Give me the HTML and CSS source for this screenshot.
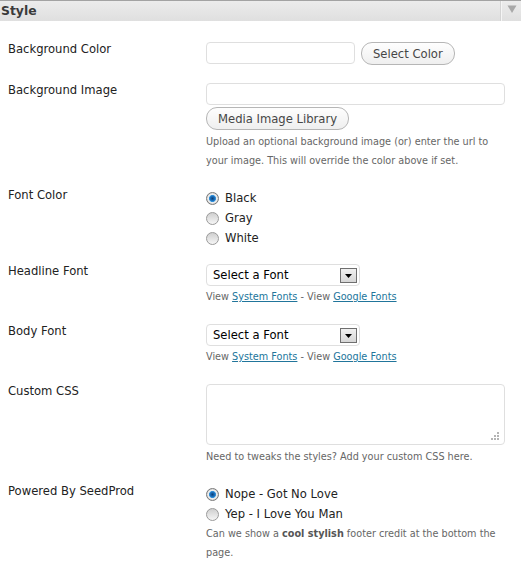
FILE: index.html
```
<!DOCTYPE html>
<html lang="en">
<head>
    <meta charset="UTF-8">
    <meta name="viewport" content="width=device-width, initial-scale=1.0">
    <title>Style</title>
    <link rel="stylesheet" href="styles.css">
</head>
<body>
    <div class="postbox">
        <div class="hndle">
            <h3>Style</h3>
            <div class="handlediv">
                <svg width="10" height="10" viewBox="0 0 10 10"><path d="M0.5 1.5 L9.5 1.5 L5 9 Z" fill="#a8a8a8"/></svg>
            </div>
        </div>
        <div class="inside">
            <div class="row">
                <label class="row-label">Background Color</label>
                <div class="row-field inline">
                    <input type="text" class="text color-input">
                    <button type="button" class="button">Select Color</button>
                </div>
            </div>
            <div class="row">
                <label class="row-label">Background Image</label>
                <div class="row-field">
                    <input type="text" class="text wide-input">
                    <button type="button" class="button media-btn">Media Image Library</button>
                    <p class="help">Upload an optional background image (or) enter the url to your image. This will override the color above if set.</p>
                </div>
            </div>
            <div class="row radios-row">
                <label class="row-label">Font Color</label>
                <div class="row-field">
                    <label class="radio"><input type="radio" name="fontcolor" checked> Black</label>
                    <label class="radio"><input type="radio" name="fontcolor"> Gray</label>
                    <label class="radio"><input type="radio" name="fontcolor"> White</label>
                </div>
            </div>
            <div class="row">
                <label class="row-label">Headline Font</label>
                <div class="row-field">
                    <div class="select">
                        <span>Select a Font</span>
                        <span class="select-arrow"><svg width="7" height="4" viewBox="0 0 7 4"><path d="M0 0 H7 L3.5 4 Z" fill="#000"/></svg></span>
                    </div>
                    <p class="help fonts">View <a href="#">System Fonts</a> - View <a href="#">Google Fonts</a></p>
                </div>
            </div>
            <div class="row">
                <label class="row-label">Body Font</label>
                <div class="row-field">
                    <div class="select">
                        <span>Select a Font</span>
                        <span class="select-arrow"><svg width="7" height="4" viewBox="0 0 7 4"><path d="M0 0 H7 L3.5 4 Z" fill="#000"/></svg></span>
                    </div>
                    <p class="help fonts">View <a href="#">System Fonts</a> - View <a href="#">Google Fonts</a></p>
                </div>
            </div>
            <div class="row">
                <label class="row-label">Custom CSS</label>
                <div class="row-field">
                    <div class="textarea">
                        <svg class="grip" width="8" height="8" viewBox="0 0 8 8" fill="#b4b4b4">
                            <rect x="6" y="0" width="2" height="2"/>
                            <rect x="3" y="3" width="2" height="2"/><rect x="6" y="3" width="2" height="2"/>
                            <rect x="0" y="6" width="2" height="2"/><rect x="3" y="6" width="2" height="2"/><rect x="6" y="6" width="2" height="2"/>
                        </svg>
                    </div>
                    <p class="help">Need to tweaks the styles? Add your custom CSS here.</p>
                </div>
            </div>
            <div class="row">
                <label class="row-label">Powered By SeedProd</label>
                <div class="row-field">
                    <label class="radio"><input type="radio" name="powered" checked> Nope - Got No Love</label>
                    <label class="radio"><input type="radio" name="powered"> Yep - I Love You Man</label>
                    <p class="help credit">Can we show a <strong>cool stylish</strong> footer credit at the bottom the page.</p>
                </div>
            </div>
        </div>
    </div>
</body>
</html>
```

FILE: styles.css
```
body {
    margin: 0;
    background: #fff;
    font-family: "DejaVu Sans", Verdana, sans-serif;
    font-size: 11.6px;
    color: #333;
}

.hndle {
    display: flex;
    height: 20px;
    border-top: 1px solid #a3a3a3;
    background: linear-gradient(#ececec, #dfdfdf);
}

.hndle h3 {
    flex: 1;
    margin: 0;
    padding-left: 1px;
    font-size: 12.4px;
    line-height: 19px;
    color: #3a3a3a;
}

.handlediv {
    width: 19px;
    display: flex;
    justify-content: center;
    padding-top: 3px;
    border-left: 1px solid #f5f5f5;
    box-shadow: -1px 0 0 #d4d4d4;
}

.inside {
    padding: 11px 16px 0 8px;
}

.row {
    display: grid;
    grid-template-columns: 198px 1fr;
    padding: 10px 0 8px;
}

.row.radios-row {
    padding-bottom: 6px;
}

.row-label {
    line-height: 15px;
    color: #222;
}

.row-field.inline {
    display: flex;
    align-items: flex-start;
    gap: 6px;
}

.text {
    display: block;
    box-sizing: border-box;
    height: 22px;
    margin: 0;
    border: 1px solid #dfdfdf;
    border-radius: 4px;
    background: #fff;
}

.color-input {
    width: 149px;
}

.wide-input {
    width: 100%;
}

.button {
    box-sizing: border-box;
    height: 23px;
    padding: 0 11px;
    border: 1px solid #b6b6b6;
    border-radius: 11px;
    background: linear-gradient(#fefefe, #efefef);
    font-family: inherit;
    font-size: 11.6px;
    color: #464646;
    cursor: pointer;
}

.media-btn {
    display: block;
    margin-top: 2px;
}

.help {
    margin: 2px 0 0;
    font-size: 9.7px;
    line-height: 19px;
    color: #666;
}

.help.fonts {
    margin-top: 1px;
}

.help.credit {
    margin-top: 0;
}

.help a {
    color: #21759b;
}

.help strong {
    color: #555;
}

.radio {
    display: flex;
    align-items: center;
    height: 20px;
    color: #222;
}

.radio input {
    appearance: none;
    -webkit-appearance: none;
    box-sizing: border-box;
    width: 13px;
    height: 13px;
    margin: 0 6px 0 0;
    border: 1px solid #9a9a9a;
    border-radius: 50%;
    background: linear-gradient(#cfcfcf, #f6f6f6);
}

.radio input:checked {
    border-color: #7a7a7a;
    background: radial-gradient(circle, #0b3f78 0, #1f75c2 2.5px, #3b9ae0 3.3px, #ececec 3.8px, #ececec 4.6px, #c4c4c4 6px);
}

.select {
    box-sizing: border-box;
    display: flex;
    align-items: center;
    justify-content: space-between;
    width: 154px;
    height: 22px;
    padding: 0 2px 0 6px;
    border: 1px solid #dfdfdf;
    border-radius: 4px;
    color: #000;
}

.select-arrow {
    box-sizing: border-box;
    display: flex;
    align-items: center;
    justify-content: center;
    width: 17px;
    height: 15px;
    padding-top: 2px;
    border: 1px solid #6f6f6f;
    background: linear-gradient(#f0f0f0, #d6d6d6);
}

.textarea {
    position: relative;
    box-sizing: border-box;
    height: 61px;
    border: 1px solid #dfdfdf;
    border-radius: 4px;
}

.grip {
    position: absolute;
    right: 5px;
    bottom: 4px;
}
```
